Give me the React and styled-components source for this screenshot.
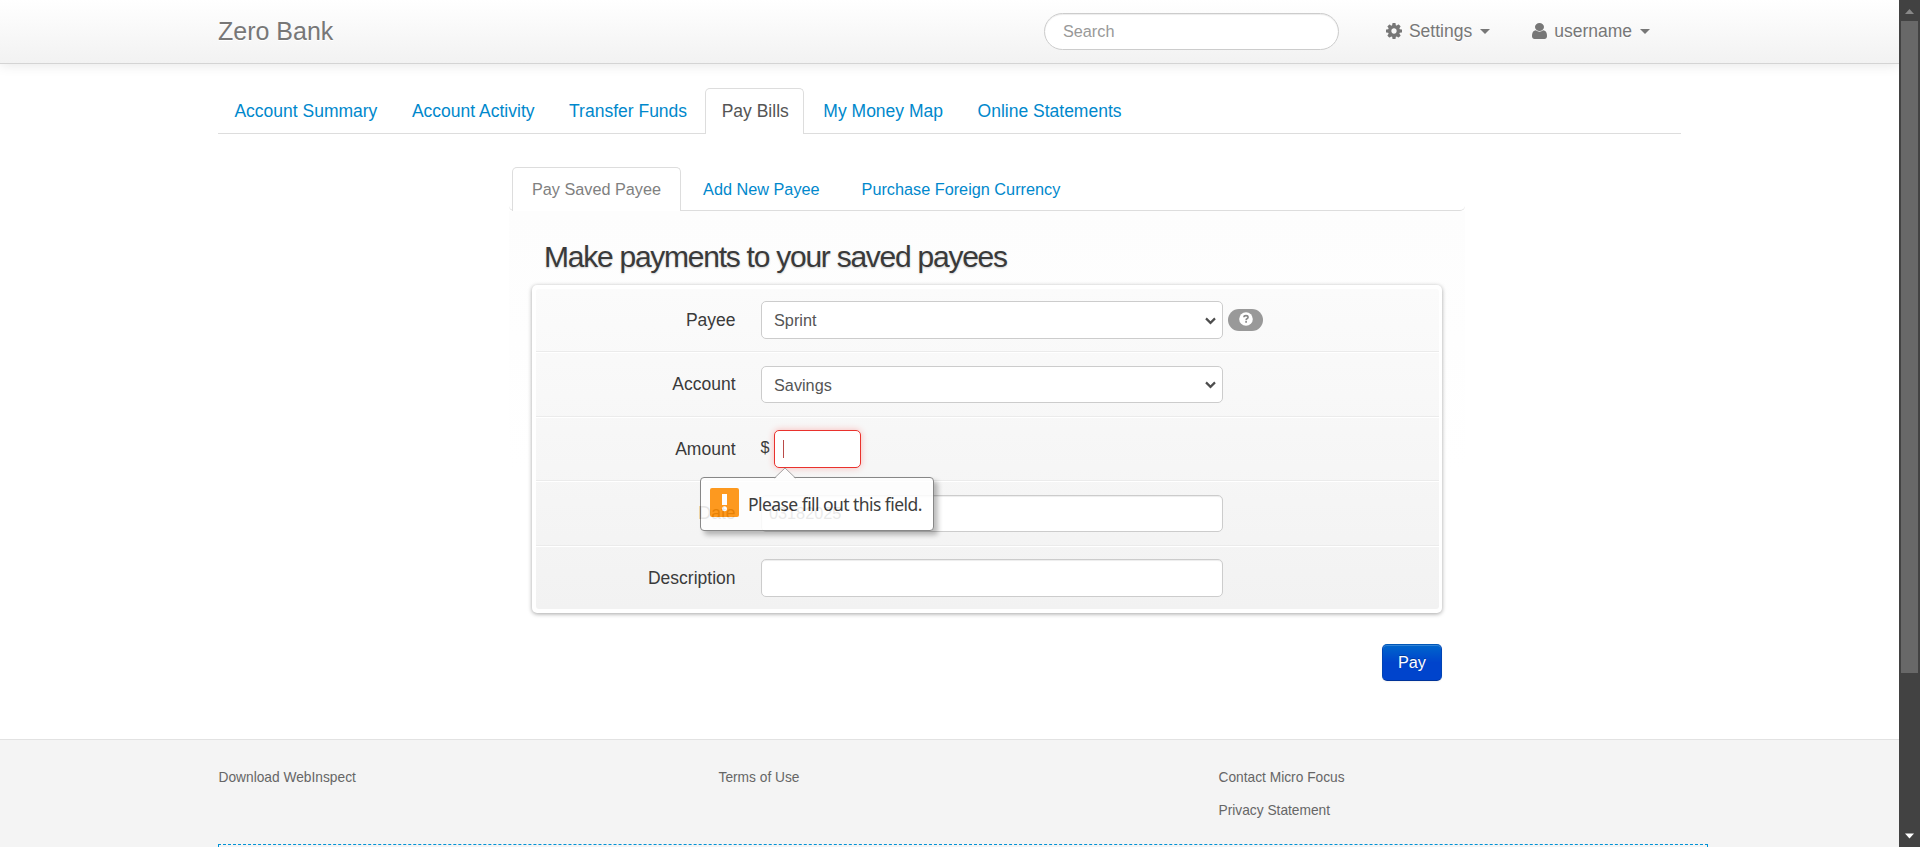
import React from "react";
import styled, { createGlobalStyle, css } from "styled-components";

const GlobalStyle = createGlobalStyle`
  *, *::before, *::after { box-sizing: border-box; }
  html, body { margin: 0; padding: 0; height: 847px; overflow: hidden; background: #fff; }
  body { font-family: "Liberation Sans", Arial, sans-serif; font-size: 16.25px; line-height: 25px; color: #3a3a3a; }
  ul { list-style: none; margin: 0; padding: 0; }
  a { color: inherit; text-decoration: none; }
`;

const Window = styled.div`
  display: grid;
  grid-template-columns: minmax(0, 1fr) 21px;
  width: 1920px;
  height: 847px;
  overflow: hidden;
`;

const Page = styled.div`
  display: flex;
  flex-direction: column;
  height: 847px;
  overflow: hidden;
`;

/* Top bar */
const Navbar = styled.header`
  display: flex;
  align-items: center;
  flex: none;
  height: 64px;
  padding: 0 249px 0 218px;
  color: #777;
  background: linear-gradient(#fff, #f2f2f2);
  border-bottom: 1px solid #d4d4d4;
  box-shadow: 0 1px 12px rgba(0, 0, 0, 0.1);
`;

const Brand = styled.a`
  margin-right: auto;
  font-size: 25px;
  text-shadow: 0 1px 0 #fff;
`;

const Search = styled.input`
  width: 295px;
  height: 37px;
  margin-right: 47px;
  padding: 0 18px;
  font: 16.25px "Liberation Sans", Arial, sans-serif;
  border: 1px solid #ccc;
  border-radius: 19px;
  outline: 0;
  box-shadow: inset 0 1px 1px rgba(0, 0, 0, 0.075);
  &::placeholder { color: #999; opacity: 1; }
`;

const MenuLink = styled.a`
  display: flex;
  align-items: center;
  font-size: 17.5px;
  text-shadow: 0 1px 0 #fff;
  & + & { margin-left: 42px; }
  svg { display: block; fill: #777; margin: -1px 7px 0 0; }
`;

const Caret = styled.i`
  margin: 0 0 0 8px;
  border: 5px solid transparent;
  border-top-color: #777;
  border-bottom: 0;
`;

/* Tabs */
const Tabs = styled.ul`
  display: flex;
  flex: none;
  border-bottom: 1px solid #ddd;
`;

const MainTabs = styled(Tabs)`
  width: 1463px;
  margin: 24px 0 0 218px;
  font-size: 17.5px;
`;

const SubTabs = styled(Tabs)`
  padding-left: 3px;
  background: #fff;
  border-radius: 0 0 5px 5px;
`;

const Tab = styled.li`
  margin: 0 2.5px -1px 0;
  padding: ${(p) => (p.$sub ? "9px 18.6px 9px 18.9px" : "10px 14.7px 10px 15.4px")};
  border: 1px solid transparent;
  border-bottom: 0;
  border-radius: 5px 5px 0 0;
  color: #0088cc;
  ${(p) => p.$active && css`
    color: ${p.$sub ? "#808080" : "#555"};
    background: #fff;
    border-color: #ddd;
  `}
`;

const Panel = styled.main`
  width: 956px;
  height: 572px;
  flex: none;
  margin: 33px 0 0 509px;
`;

const PanelBody = styled.section`
  display: flex;
  flex-direction: column;
  padding: 26px 22px 0 23px;
  background: linear-gradient(#fdfdfd, #fff 260px);
`;

const Title = styled.h2`
  margin: 0 0 7.75px 12px;
  font-size: 30px;
  font-weight: 400;
  line-height: 40px;
  letter-spacing: -1.25px;
  text-shadow: 0 1px 2px rgba(0, 0, 0, 0.2);
`;

const Board = styled.div`
  width: 910px;
  padding: 4px 3px 4px 4px;
  background: #fff;
  border-radius: 5px;
  box-shadow: 0 1px 4px rgba(0, 0, 0, 0.36);
`;

const Rows = styled.div`
  border-radius: 3px;
  background: linear-gradient(#fbfbfb, #f2f2f2);
`;

const Row = styled.div`
  display: flex;
  align-items: center;
  height: 62.5px;
  position: relative;
  & + & {
    height: 64.5px;
    border-top: 1px solid #ebebeb;
    box-shadow: inset 0 1px 0 #fff;
    padding-top: 1px;
  }
`;

const Label = styled.label`
  width: 199.5px;
  margin-right: 25.5px;
  font-size: 17.5px;
  text-align: right;
`;

const Currency = styled.span`
  margin: 0 0 3px -0.5px;
`;

const field = css`
  height: 37.5px;
  border: 1px solid #ccc;
  border-radius: 5px;
  background: #fff;
  color: #555;
  font: 16.25px "Liberation Sans", Arial, sans-serif;
  outline: 0;
  box-shadow: inset 0 1px 1px rgba(0, 0, 0, 0.075);
`;

const Input = styled.input`
  ${field}
  width: 462px;
  padding: 0 7px;
`;

const SelectBox = styled.div`
  ${field}
  display: flex;
  align-items: center;
  justify-content: space-between;
  width: 462px;
  padding: 1px 6px 0 12px;
  box-shadow: none;
`;

const AmountBox = styled.div`
  ${field}
  display: flex;
  align-items: center;
  width: 87px;
  margin-left: 4.5px;
  padding-left: 8px;
  border-color: #e9322d;
  box-shadow: 0 0 7px #f8b9b7;
`;

const TextCursor = styled.i`
  width: 1px;
  height: 18px;
  background: #b94a48;
`;

const HelpBadge = styled.span`
  display: flex;
  justify-content: center;
  width: 35px;
  height: 22px;
  margin-left: 5px;
  padding-top: 3px;
  border-radius: 11px;
  background: #999;
`;

const Bubble = styled.div`
  position: absolute;
  z-index: 2;
  top: 60.25px;
  left: 164px;
  display: flex;
  align-items: center;
  width: 234px;
  height: 54px;
  padding: 0 0 0 9px;
  border: 1px solid #777;
  border-radius: 4px;
  background: #fff;
  color: #222;
  opacity: 0.87;
  box-shadow: 4px 4px 5px rgba(0, 0, 0, 0.3);
  font: 17.5px "Noto Sans", sans-serif;
  letter-spacing: -0.56px;
  white-space: nowrap;
`;

const BubbleArrow = styled.svg`
  position: absolute;
  top: -11px;
  left: 73px;
`;

const WarnIcon = styled.svg`
  flex: none;
  margin: -3px 9px 0 0;
`;

const PayButton = styled.button`
  align-self: flex-end;
  width: 60px;
  height: 37px;
  margin: 30.25px 1px 0 0;
  padding: 0;
  border: 1px solid;
  border-color: #0057b8 #0044b4 #003399;
  border-radius: 5px;
  color: #fff;
  background: linear-gradient(#0066cc, #0044cc 50%);
  box-shadow: inset 0 1px 0 rgba(255, 255, 255, 0.2), 0 1px 2px rgba(0, 0, 0, 0.05);
  font: 16.25px "Liberation Sans", Arial, sans-serif;
  text-shadow: 0 -1px 0 rgba(0, 0, 0, 0.25);
`;

/* Footer */
const Footer = styled.footer`
  flex: 1;
  padding: 25px 0 0 218px;
  background: #f4f4f4;
  border-top: 1px solid #e2e2e2;
`;

const FooterLinks = styled.div`
  display: grid;
  grid-template-columns: repeat(3, 500px);
  height: 79px;
  padding-left: 0.5px;
  color: #666;
  font-size: 13.75px;
  a { display: block; margin-bottom: 8px; }
`;

const Disclaimer = styled.div`
  width: 1490px;
  height: 60px;
  border: 1px dashed #0092d6;
`;

/* Scrollbar */
const ScrollTrack = styled.aside`
  display: flex;
  flex-direction: column;
  align-items: center;
  height: 847px;
  background: #424242;
`;

const ScrollArrow = styled.svg`
  height: ${(p) => p.$h}px;
  width: 21px;
  flex: none;
`;

const ScrollThumb = styled.div`
  width: 17px;
  height: 652px;
  margin-bottom: auto;
  background: #686868;
`;

const GearIcon = () => (
  <svg width="16" height="16" viewBox="0 128 1536 1536">
    <path d="M1024 896q0-106-75-181t-181-75-181 75-75 181 75 181 181 75 181-75 75-181zm512-109v222q0 12-8 23t-20 13l-185 28q-19 54-39 91 35 50 107 138 10 12 10 25t-9 23q-27 37-99 108t-94 71q-12 0-26-9l-138-108q-44 23-91 38-16 136-29 186-7 28-36 28h-222q-14 0-24.5-8.5t-11.5-21.5l-28-184q-49-16-90-37l-141 107q-10 9-25 9-14 0-25-11-126-114-165-168-7-10-7-23 0-12 8-23 15-21 51-66.5t54-70.5q-27-50-41-99l-183-27q-13-2-21-12.5t-8-23.5v-222q0-12 8-23t19-13l186-28q14-46 39-92-40-57-107-138-10-12-10-24 0-10 9-23 26-36 98.5-107.5t94.5-71.5q13 0 26 10l138 107q44-23 91-38 16-136 29-186 7-28 36-28h222q14 0 24.5 8.5t11.5 21.5l28 184q49 16 90 37l142-107q9-9 24-9 13 0 25 10 129 119 165 170 7 8 7 22 0 12-8 23-15 21-51 66.5t-54 70.5q26 50 41 98l183 28q13 2 21 12.5t8 23.5z" />
  </svg>
);

const UserIcon = () => (
  <svg width="15" height="16" viewBox="0 0 1280 1536" preserveAspectRatio="none">
    <path d="M1280 1271q0 109-62.5 187t-150.5 78h-854q-88 0-150.5-78t-62.5-187q0-85 8.5-160.5t31.5-152 58.5-131 94-89 134.5-34.5q131 128 313 128t313-128q76 0 134.5 34.5t94 89 58.5 131 31.5 152 8.5 160.5zm-256-887q0 159-112.5 271.5t-271.5 112.5-271.5-112.5-112.5-271.5 112.5-271.5 271.5-112.5 271.5 112.5 112.5 271.5z" />
  </svg>
);

const Select = ({ value }) => (
  <SelectBox>
    {value}
    <svg width="11" height="8" viewBox="0 0 11 8">
      <path d="M1 1.4 5.5 5.9 10 1.4" fill="none" stroke="#4d4d4d" strokeWidth="2.2" />
    </svg>
  </SelectBox>
);

const mainTabs = ["Account Summary", "Account Activity", "Transfer Funds", "Pay Bills", "My Money Map", "Online Statements"];
const subTabs = ["Pay Saved Payee", "Add New Payee", "Purchase Foreign Currency"];

export default function App() {
  return (
    <Window>
      <GlobalStyle />
      <Page>
        <Navbar>
          <Brand>Zero Bank</Brand>
          <Search placeholder="Search" />
          <MenuLink><GearIcon />Settings<Caret /></MenuLink>
          <MenuLink><UserIcon />username<Caret /></MenuLink>
        </Navbar>
        <MainTabs>
          {mainTabs.map((t) => <Tab key={t} $active={t === "Pay Bills"}>{t}</Tab>)}
        </MainTabs>
        <Panel>
          <SubTabs>
            {subTabs.map((t, i) => <Tab key={t} $sub $active={i === 0}>{t}</Tab>)}
          </SubTabs>
          <PanelBody>
            <Title>Make payments to your saved payees</Title>
            <Board>
              <Rows>
                <Row>
                  <Label>Payee</Label>
                  <Select value="Sprint" />
                  <HelpBadge>
                    <svg width="14" height="14" viewBox="0 0 14 14">
                      <circle cx="7" cy="7" r="6.8" fill="#fff" />
                      <path d="M4.9 5.2Q5 3.6 7 3.6T9.1 5.3Q9.1 6.2 8 6.7 7.1 7.1 7.1 8.2" fill="none" stroke="#888" strokeWidth="1.6" />
                      <rect x="6.2" y="9.1" width="1.8" height="1.6" fill="#888" />
                    </svg>
                  </HelpBadge>
                </Row>
                <Row>
                  <Label>Account</Label>
                  <Select value="Savings" />
                </Row>
                <Row>
                  <Label>Amount</Label>
                  <Currency>$</Currency>
                  <AmountBox><TextCursor /></AmountBox>
                  <Bubble role="alert">
                    <BubbleArrow width="22" height="12" viewBox="0 0 22 12">
                      <path d="M0.5 12 11 1 21.5 12Z" fill="#fff" />
                      <path d="M0.5 11 11 1 21.5 11" fill="none" stroke="#999" />
                    </BubbleArrow>
                    <WarnIcon width="29" height="29" viewBox="0 0 29 29">
                      <rect width="29" height="29" rx="2" fill="#ff8c00" />
                      <path d="M12 6h5v11h-5z" fill="#fff" />
                      <circle cx="14.5" cy="20.7" r="2.5" fill="#fff" />
                    </WarnIcon>
                    Please fill out this field.
                  </Bubble>
                </Row>
                <Row>
                  <Label>Date</Label>
                  <Input defaultValue="03182025" />
                </Row>
                <Row>
                  <Label>Description</Label>
                  <Input />
                </Row>
              </Rows>
            </Board>
            <PayButton>Pay</PayButton>
          </PanelBody>
        </Panel>
        <Footer>
          <FooterLinks>
            <div><a>Download WebInspect</a></div>
            <div><a>Terms of Use</a></div>
            <div><a>Contact Micro Focus</a><a>Privacy Statement</a></div>
          </FooterLinks>
          <Disclaimer />
        </Footer>
      </Page>
      <ScrollTrack>
        <ScrollArrow $h={21} viewBox="0 0 21 21"><path d="M6 14 10.5 9 15 14Z" fill="#888" /></ScrollArrow>
        <ScrollThumb />
        <ScrollArrow $h={21} viewBox="0 0 21 21"><path d="M6 7.5 10.5 12.5 15 7.5Z" fill="#fff" /></ScrollArrow>
      </ScrollTrack>
    </Window>
  );
}
